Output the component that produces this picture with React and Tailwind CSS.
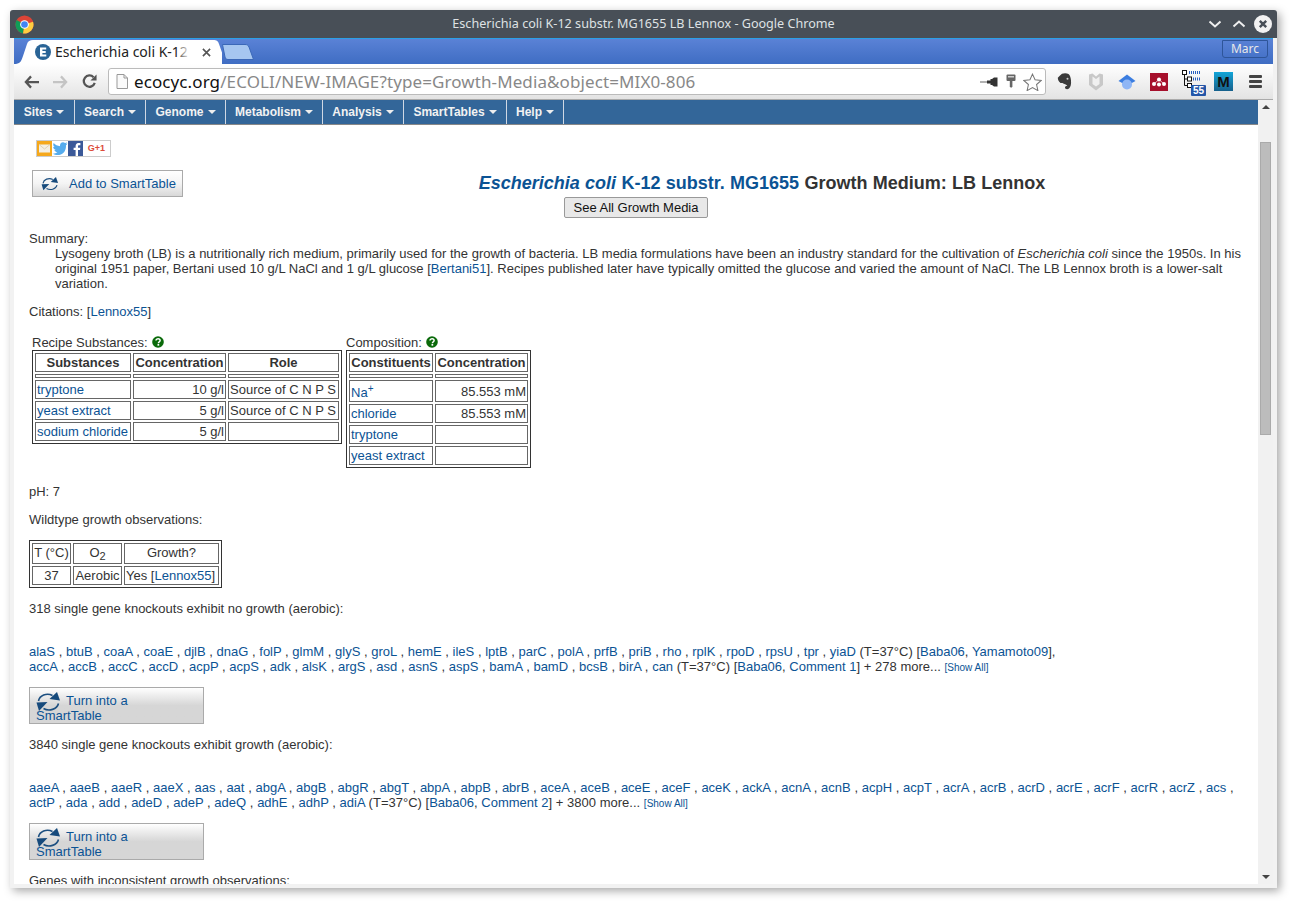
import React from 'react';

const LINK = 'text-[#0b5394]';

const navItems = [
  ['Sites', 'w-[61px]'],
  ['Search', 'w-[71px]'],
  ['Genome', 'w-[80px]'],
  ['Metabolism', 'w-[97px]'],
  ['Analysis', 'w-[81px]'],
  ['SmartTables', 'w-[103px]'],
  ['Help', 'w-[57px]'],
];

const noGrowth1 = ['alaS', 'btuB', 'coaA', 'coaE', 'djlB', 'dnaG', 'folP', 'glmM', 'glyS', 'groL', 'hemE', 'ileS', 'lptB', 'parC', 'polA', 'prfB', 'priB', 'rho', 'rplK', 'rpoD', 'rpsU', 'tpr', 'yiaD'];
const noGrowth2 = ['accA', 'accB', 'accC', 'accD', 'acpP', 'acpS', 'adk', 'alsK', 'argS', 'asd', 'asnS', 'aspS', 'bamA', 'bamD', 'bcsB', 'birA', 'can'];
const growth1 = ['aaeA', 'aaeB', 'aaeR', 'aaeX', 'aas', 'aat', 'abgA', 'abgB', 'abgR', 'abgT', 'abpA', 'abpB', 'abrB', 'aceA', 'aceB', 'aceE', 'aceF', 'aceK', 'ackA', 'acnA', 'acnB', 'acpH', 'acpT', 'acrA', 'acrB', 'acrD', 'acrE', 'acrF', 'acrR', 'acrZ', 'acs'];
const growth2 = ['actP', 'ada', 'add', 'adeD', 'adeP', 'adeQ', 'adhE', 'adhP', 'adiA'];

const A = ({ children }) => <span className={LINK}>{children}</span>;

const Genes = ({ names, trailing }) => (
  <>
    {names.map((n, i) => (
      <React.Fragment key={n}>
        <A>{n}</A>
        {i < names.length - 1 || trailing ? ' , ' : ' '}
      </React.Fragment>
    ))}
  </>
);

const Help = () => (
  <svg viewBox="0 0 12 12" className="inline-block w-[12px] h-[12px] ml-[4px] align-[-1px]">
    <circle cx="6" cy="6" r="5.8" fill="#0a6a0a" />
    <path d="M4 4.6c0-1.2 1-1.9 2.1-1.9S8.100 3.400 8.100 4.500c0 1.500-1.700 1.400-1.700 2.700" fill="none" stroke="#fff" strokeWidth="1.500" />
    <rect x="5.500" y="8" width="1.700" height="1.700" fill="#fff" />
  </svg>
);

const SyncIcon = ({ className }) => (
  <svg viewBox="0 0 24 20" className={className}>
    <path d="M2 9C3 3.500 10 0.500 16 3.500" fill="none" stroke="#1c4f80" strokeWidth="1.600" />
    <path d="M13 7 23.500 8.500 20.500 0Z" fill="#164a7c" />
    <path d="M22 11.500C20.500 17.500 12.500 19.500 7 16.500" fill="none" stroke="#1c4f80" strokeWidth="1.600" />
    <path d="M0 10.500 11 10 2.500 19Z" fill="#164a7c" />
  </svg>
);

// cell with the inset 1px border of the old html tables
const Td = ({ children, className = '', head }) => {
  const Tag = head ? 'th' : 'td';
  return <Tag className={`border border-[#666] p-[1px] leading-[15px] ${className}`}>{children}</Tag>;
};

const DataTable = ({ children, className = '' }) => (
  <table className={`border border-[#333] border-separate border-spacing-[2px] ${className}`}>
    <tbody>{children}</tbody>
  </table>
);

const Spacer = ({ cols }) => (
  <tr>
    {cols.map((w) => (
      <td key={w} className={`${w} h-[4px] border border-[#666] p-0`} />
    ))}
  </tr>
);

const ChromeLogo = () => (
  <svg viewBox="0 0 20 20" className="w-[19px] h-[19px]">
    <circle cx="10" cy="10" r="9.500" fill="#db4437" />
    <path d="M10 10 1.800 5.200A9.500 9.500 0 0 0 8.500 19.400Z" fill="#0f9d58" />
    <path d="M10 10 19 7A9.500 9.500 0 0 1 8.500 19.400Z" fill="#ffcd40" />
    <circle cx="10" cy="10" r="4.600" fill="#fff" />
    <circle cx="10" cy="10" r="3.500" fill="#4285f4" />
  </svg>
);

const Social = () => (
  <div className="ml-[7px] flex w-[75px] h-[17px] items-center border border-[#ccc] bg-white">
    <svg viewBox="0 0 15 15" className="w-[15px] h-[15px]">
      <rect width="15" height="15" fill="#f5a81c" />
      <rect x="2" y="3.500" width="11" height="8" fill="#f4efe3" />
      <path d="M2 3.500 7.500 8 13 3.500" fill="none" stroke="#d9c9a8" strokeWidth="0.800" />
    </svg>
    <svg viewBox="0 0 16 15" className="w-[16px] h-[15px]">
      <path d="M15.500 2.500c-.6.300-1.200.4-1.800.5.600-.4 1.100-1 1.300-1.700-.6.400-1.300.6-2 .8C11.200.3 8 1.500 8 4.500c0 .3 0 .5.100.7C5.500 5 3.200 3.800 1.700 2c-.8 1.400-.4 3.200.9 4.100-.5 0-1-.2-1.400-.4 0 1.600 1.100 2.900 2.600 3.200-.5.100-1 .2-1.400.1.400 1.300 1.600 2.200 3 2.200C4 12.300 2.200 12.800.5 12.600 7 16.500 14.400 12.500 14 4.300c.6-.5 1.100-1.100 1.500-1.800Z" fill="#55acee" />
    </svg>
    <svg viewBox="0 0 15 15" className="w-[15px] h-[15px]">
      <rect width="15" height="15" fill="#3b5998" />
      <path d="M10 15V9h2l.3-2.300H10V5.300c0-.7.200-1.100 1.100-1.100h1.300V2.100C11 1.900 7.600 1.700 7.600 5v1.700H5.600V9h2v6Z" fill="#fff" />
    </svg>
    <span className="flex-1 text-center text-[9px] font-bold leading-[15px] text-[#dd4b39]">G+1</span>
  </div>
);

const TurnButton = () => (
  <div className={`w-[175px] h-[37px] border border-[#aaa] bg-gradient-to-b from-white via-[#d6d6d6] via-50% to-[#d6d6d6] pl-[6px] pt-[5px] leading-[15px] ${LINK}`}>
    <SyncIcon className="inline-block w-[25px] h-[20px] mr-[5px] -my-[5px] align-middle" />
    Turn into a
    <br />
    SmartTable
  </div>
);

export default function App() {
  return (
    <div className="w-[1293px] h-[904px] overflow-hidden bg-white pl-[10px] pt-[10px] font-['Liberation_Sans',Arial,sans-serif] text-[13px] leading-[15px] text-[#333]">
      <div className="w-[1267px] h-[878px] flex flex-col rounded-t-[3px] overflow-hidden bg-[#f2f2f2] shadow-[3px_3px_10px_rgba(0,0,0,0.35)]">
        {/* Window title bar */}
        <div className="grid grid-cols-[1fr_auto_1fr] items-center h-[28px] bg-[#484f57] shrink-0">
          <div className="pl-[5px]">
            <ChromeLogo />
          </div>
          <div className="font-['Noto_Sans',sans-serif] text-[12.6px] -mt-[1px] text-[#dfe2e4]">Escherichia coli K-12 substr. MG1655 LB Lennox - Google Chrome</div>
          <div className="flex items-center justify-end pr-[5px] gap-[10px]">
            <svg viewBox="0 0 14 14" className="w-[14px] h-[14px]"><path d="M1.500 4.500 7 9.500l5.500-5" fill="none" stroke="#eee" strokeWidth="2" /></svg>
            <svg viewBox="0 0 14 14" className="w-[14px] h-[14px]"><path d="M1.500 9.500 7 4.500l5.500 5" fill="none" stroke="#eee" strokeWidth="2" /></svg>
            <svg viewBox="0 0 18 18" className="-ml-[2px] w-[18px] h-[18px]">
              <circle cx="9" cy="9" r="9" fill="#f2f2f2" />
              <path d="M5.800 5.800l6.400 6.400M12.200 5.800l-6.400 6.400" stroke="#484f57" strokeWidth="2.400" />
            </svg>
          </div>
        </div>

        <div className="flex-1 min-h-0 mx-[4px] mb-[4px] flex flex-col border-t border-[#2aa0e6]">
          {/* Tab strip */}
          <div className="relative flex items-end h-[25px] shrink-0 bg-gradient-to-b from-[#5a82d6] to-[#3f6dc3]">
            <div className="relative w-[208px] h-[24px] shrink-0 flex items-center pl-[21px]">
              <svg viewBox="0 0 208 24" preserveAspectRatio="none" className="absolute inset-0 w-full h-full">
                <path d="M0 24C6 24 7 22 9 16L13 4C14 1 16 0 19 0H199C203 0 204 1 205 4L212 24Z" fill="#fff" />
              </svg>
              <svg viewBox="0 0 16 16" className="relative w-[16px] h-[16px] shrink-0">
                <circle cx="8" cy="8" r="8" fill="#2a6496" />
                <path d="M5 3.500h6.200v2H7.400V7h3.300v1.900H7.400v1.600h3.900v2H5Z" fill="#fff" />
              </svg>
              <span className="relative ml-[4px] w-[135px] whitespace-nowrap overflow-hidden font-['Noto_Sans',sans-serif] text-[14px] leading-[18px] text-[#222]">
                Escherichia coli K-12
                <span className="absolute right-0 top-0 h-full w-[14px] bg-gradient-to-r from-transparent to-white" />
              </span>
              <svg viewBox="0 0 10 10" className="relative ml-[12px] w-[9px] h-[9px]"><path d="M1 1l8 8M9 1l-8 8" stroke="#555" strokeWidth="1.800" /></svg>
            </div>
            <svg viewBox="0 0 32 16" className="mb-[4px] w-[32px] h-[16px]">
              <path d="M0.500 0.500H23C25 0.500 26 1 27 3L31.500 15.500H6C4 15.500 3.500 14.500 3 13Z" fill="#a6c6f0" stroke="#3b68b8" />
            </svg>
            <div className="absolute right-[5px] top-[1px] h-[18px] w-[46px] rounded-b-[3px] border border-[#2e5599] text-center font-['Noto_Sans',sans-serif] text-[12px] leading-[16px] text-[#e8e8e8]">Marc</div>
          </div>

          {/* Toolbar */}
          <div className="flex items-center h-[36px] shrink-0 border-b border-[#aaa] bg-gradient-to-b from-white to-[#e3e3e3]">
            <svg viewBox="0 0 16 14" className="ml-[10px] w-[15px] h-[14px]"><path d="M7.500 1 2 7l5.500 6M2.500 7H16" fill="none" stroke="#555" strokeWidth="2.400" /></svg>
            <svg viewBox="0 0 16 14" className="ml-[14px] w-[15px] h-[14px]"><path d="M8.500 1 14 7l-5.500 6M13.500 7H0" fill="none" stroke="#c4c4c4" strokeWidth="2.400" /></svg>
            <svg viewBox="0 0 16 16" className="ml-[14px] w-[15px] h-[15px]">
              <path d="M13.600 9.500A6 6 0 1 1 12.300 3.500" fill="none" stroke="#555" strokeWidth="2.400" />
              <path d="M15.500 0.500V7H9Z" fill="#555" />
            </svg>
            {/* Address bar */}
            <div className="ml-[11px] flex items-center w-[938px] h-[27px] rounded-[3px] border border-[#bbb] bg-white">
              <svg viewBox="0 0 12 15" className="ml-[7px] w-[12px] h-[15px]">
                <path d="M1 .5h7l3.500 3.500v10.500H1Z" fill="#fafafa" stroke="#999" />
                <path d="M8 .5V4h3.500" fill="none" stroke="#999" />
              </svg>
              <div className="ml-[6px] flex-1 whitespace-nowrap font-['Noto_Sans',sans-serif] text-[17px] tracking-[0.1px] leading-[20px] text-[#888]">
                <span className="text-[#111]">ecocyc.org</span>/ECOLI/NEW-IMAGE?type=Growth-Media&amp;object=MIX0-806
              </div>
              <svg viewBox="0 0 20 12" className="w-[20px] h-[12px]">
                <path d="M0 6h10" stroke="#999" strokeWidth="1.400" />
                <path d="M7 4.500h3.500V3h1.500l2-1.500h3.500v9H14l-2-1.500h-1.500V7.500H7Z" fill="#333" />
              </svg>
              <svg viewBox="0 0 10 15" className="ml-[6px] w-[10px] h-[15px]">
                <rect x="0.500" y="0.500" width="9" height="6.500" rx="1" fill="#666" />
                <path d="M3.800 6h2.600v6.500l-1.300 1.500-1.300-1.500Z" fill="#666" />
                <rect x="2" y="2" width="6" height="1.500" fill="#ccc" />
              </svg>
              <svg viewBox="0 0 20 19" className="ml-[7px] mr-[3px] w-[19px] h-[18px]">
                <path d="M10 1.200l2.700 6 6.500.7-4.900 4.300 1.400 6.400L10 15.300l-5.700 3.300 1.400-6.400L.8 7.900l6.500-.7Z" fill="#fff" stroke="#777" strokeWidth="1.100" />
              </svg>
            </div>
            {/* Extensions */}
            <svg viewBox="0 0 15 17" className="ml-[11px] w-[15px] h-[17px]">
              <path d="M3 2.500 5 .8c2-.7 5-.7 6.500.3 1.500 1 2.200 3.500 2.500 6.500.3 3.500-.2 6.500-2 8-1.500 1.200-4 .8-4-1C8 13 9.500 12.500 10.500 13.200 9.500 11 7 11.200 5.500 10H3.500C1.500 8.500.8 6.500.8 4.800Z" fill="#3a3a3a" />
              <circle cx="10.500" cy="5.800" r="1" fill="#ccc" />
            </svg>
            <svg viewBox="0 0 16 18" className="ml-[16px] w-[16px] h-[18px]">
              <path d="M1 1.500 4.500 .5 8 3.500 11.500 .5 15 1.500V12L8 17.500 1 12Z" fill="#c8c8c8" />
              <path d="M4.500 3.500 8 6l3.500-2.500V11L8 13.500 4.500 11Z" fill="#f0f0f0" />
            </svg>
            <svg viewBox="0 0 18 16" className="ml-[14px] w-[18px] h-[16px]">
              <path d="M9 .5 17.500 7 13 9.500H5L.5 7Z" fill="#3b7de0" />
              <circle cx="9" cy="10.500" r="5" fill="#8fb6f5" />
            </svg>
            <div className="ml-[14px] flex items-center justify-center w-[18px] h-[18px] bg-[#a6102c]">
              <svg viewBox="0 0 16 10" className="w-[16px] h-[10px]">
                <circle cx="3" cy="7" r="2" fill="#fff" />
                <circle cx="8" cy="2.500" r="2" fill="#fff" />
                <circle cx="13" cy="7" r="2" fill="#fff" />
                <circle cx="8" cy="7.500" r="2" fill="#fff" />
                <path d="M3 7 8 2.500 13 7" fill="none" stroke="#fff" strokeWidth="0.700" />
              </svg>
            </div>
            <div className="relative ml-[14px] w-[24px] h-[24px]">
              <svg viewBox="0 0 24 24" className="w-[24px] h-[24px]">
                <g fill="#fff" stroke="#111" strokeWidth="1">
                  <rect x="0.500" y="0.500" width="4" height="4" />
                  <rect x="5.500" y="7" width="4" height="4" />
                  <rect x="5.500" y="13.500" width="4" height="4" />
                </g>
                <path d="M2.500 4.500V9H5.500M2.500 9V15.500H5.500" fill="none" stroke="#111" />
                <path d="M7 2.500H19M11 9H19" stroke="#2a5fc0" strokeWidth="3" strokeDasharray="1 1" />
              </svg>
              <span className="absolute right-0 bottom-[-2px] w-[15px] h-[11px] rounded-[1px] bg-[#2456a8] text-center text-[10px] font-bold leading-[11px] text-white">55</span>
            </div>
            <div className="ml-[8px] w-[19px] h-[19px] bg-gradient-to-b from-[#12a5d8] to-[#16618c] text-center text-[15px] font-bold leading-[19px] text-[#111]">M</div>
            <div className="ml-[16px] flex flex-col gap-[2px] w-[13px]">
              <span className="h-[3px] rounded-[1px] bg-[#444]" />
              <span className="h-[3px] rounded-[1px] bg-[#444]" />
              <span className="h-[3px] rounded-[1px] bg-[#444]" />
            </div>
          </div>

          {/* Page viewport */}
          <div className="flex flex-1 min-h-0 bg-white">
            <div className="w-[1244px] flex flex-col overflow-hidden">
              {/* Site menu */}
              <div className="flex h-[25px] shrink-0 border-b border-[#888] bg-[#336699]">
                {navItems.map(([label, w]) => (
                  <div key={label} className={`${w} flex items-center justify-center gap-[4px] border-r border-[#d0d8e4] text-[12px] font-bold text-[#f2f2f2]`}>
                    {label}
                    <span className="w-0 h-0 border-x-[4px] border-x-transparent border-t-[4px] border-t-[#eee]" />
                  </div>
                ))}
              </div>

              <div className="pl-[15px] pr-[15px] pt-[15px]">
                <Social />
                <div className="flex mt-[13px] h-[27px]">
                  <div className={`ml-[3px] flex items-center w-[151px] h-[27px] shrink-0 border border-[#aaa] bg-gradient-to-b from-white via-[#f4f4f4] via-50% to-[#d8d8d8] pl-[8px] ${LINK}`}>
                    <SyncIcon className="w-[18px] h-[14px] mr-[10px]" />
                    Add to SmartTable
                  </div>
                  <h1 className="flex-1 pl-[98px] pt-[3px] text-center text-[18px] font-bold leading-[21px] text-[#333] [word-spacing:0.3px]">
                    <span className={LINK}><i>Escherichia coli</i> K-12 substr. MG1655</span> Growth Medium: LB Lennox
                  </h1>
                </div>
                <div className="flex justify-center">
                  <div className="w-[144px] h-[21px] rounded-[2px] border border-[#999] bg-[#e8e8e8] text-center leading-[19px] text-[#111]">See All Growth Media</div>
                </div>

                <div className="mt-[13px]">Summary:</div>
                <div className="pl-[26px] [word-spacing:0.02px]">
                  Lysogeny broth (LB) is a nutritionally rich medium, primarily used for the growth of bacteria. LB media formulations have been an industry standard for the cultivation of <i>Escherichia coli</i> since the 1950s. In his original 1951 paper, Bertani used 10 g/L NaCl and 1 g/L glucose [<A>Bertani51</A>]. Recipes published later have typically omitted the glucose and varied the amount of NaCl. The LB Lennox broth is a lower-salt variation.
                </div>

                <div className="mt-[13px]">Citations: [<A>Lennox55</A>]</div>

                <div className="flex items-start mt-[16px] ml-[3px] gap-[4px]">
                  <div>
                    <div>Recipe Substances:<Help /></div>
                    <DataTable className="w-[310px]">
                      <tr>
                        <Td head className="w-[96px]">Substances</Td>
                        <Td head className="w-[93px]">Concentration</Td>
                        <Td head className="w-[111px]">Role</Td>
                      </tr>
                      <Spacer cols={['w-[96px]', 'w-[93px]', 'w-[111px]']} />
                      <tr><Td><A>tryptone</A></Td><Td className="text-right">10 g/l</Td><Td>Source of C N P S</Td></tr>
                      <tr><Td><A>yeast extract</A></Td><Td className="text-right">5 g/l</Td><Td>Source of C N P S</Td></tr>
                      <tr><Td><A>sodium chloride</A></Td><Td className="text-right">5 g/l</Td><Td>&nbsp;</Td></tr>
                    </DataTable>
                  </div>
                  <div>
                    <div>Composition:<Help /></div>
                    <DataTable className="w-[185px]">
                      <tr>
                        <Td head className="w-[84px]">Constituents</Td>
                        <Td head className="w-[93px]">Concentration</Td>
                      </tr>
                      <Spacer cols={['w-[84px]', 'w-[93px]']} />
                      <tr>
                        <Td className="h-[22px] pt-[3px] pb-0"><A>Na<sup className="text-[10px] leading-[0]">+</sup></A></Td>
                        <Td className="text-right">85.553 mM</Td>
                      </tr>
                      <tr><Td><A>chloride</A></Td><Td className="text-right">85.553 mM</Td></tr>
                      <tr><Td><A>tryptone</A></Td><Td>&nbsp;</Td></tr>
                      <tr><Td><A>yeast extract</A></Td><Td>&nbsp;</Td></tr>
                    </DataTable>
                  </div>
                </div>

                <div className="mt-[16px]">pH: 7</div>
                <div className="mt-[13px]">Wildtype growth observations:</div>

                <DataTable className="mt-[13px] w-[193px]">
                  <tr className="text-center">
                    <Td className="w-[39px] whitespace-nowrap h-[21px] pb-[3px]">T (°C)</Td>
                    <Td className="w-[49px] pb-[3px]">O<sub className="text-[11px] leading-[0]">2</sub></Td>
                    <Td className="w-[95px] pb-[3px]">Growth?</Td>
                  </tr>
                  <tr>
                    <Td className="text-center">37</Td>
                    <Td className="text-center">Aerobic</Td>
                    <Td className="whitespace-nowrap">Yes [<A>Lennox55</A>]</Td>
                  </tr>
                </DataTable>

                <div className="mt-[13px]">318 single gene knockouts exhibit no growth (aerobic):</div>
                <div className="mt-[28px] [word-spacing:0.03px]">
                  <Genes names={noGrowth1} />(T=37°C) [<A>Baba06</A>, <A>Yamamoto09</A>],
                  <br />
                  <Genes names={noGrowth2} />(T=37°C) [<A>Baba06</A>, <A>Comment 1</A>] + 278 more... <span className={`${LINK} text-[10px]`}>[Show All]</span>
                </div>
                <div className="mt-[12px]"><TurnButton /></div>

                <div className="mt-[13px]">3840 single gene knockouts exhibit growth (aerobic):</div>
                <div className="mt-[28px] [word-spacing:0.07px]">
                  <Genes names={growth1} trailing />
                  <br />
                  <Genes names={growth2} />(T=37°C) [<A>Baba06</A>, <A>Comment 2</A>] + 3800 more... <span className={`${LINK} text-[10px]`}>[Show All]</span>
                </div>
                <div className="mt-[12px]"><TurnButton /></div>

                <div className="mt-[13px]">Genes with inconsistent growth observations:</div>
              </div>
            </div>

            {/* Scrollbar */}
            <div className="w-[15px] shrink-0 flex flex-col items-center bg-[#f1f1f1]">
              <span className="mt-[5px] w-0 h-0 border-x-[4px] border-x-transparent border-b-[4px] border-b-[#444]" />
              <div className="mt-[33px] w-[11px] h-[293px] border border-[#aaa] bg-[#bcbcbc]" />
              <span className="mt-auto mb-[5px] w-0 h-0 border-x-[4px] border-x-transparent border-t-[4px] border-t-[#444]" />
            </div>
          </div>
        </div>
      </div>
    </div>
  );
}
